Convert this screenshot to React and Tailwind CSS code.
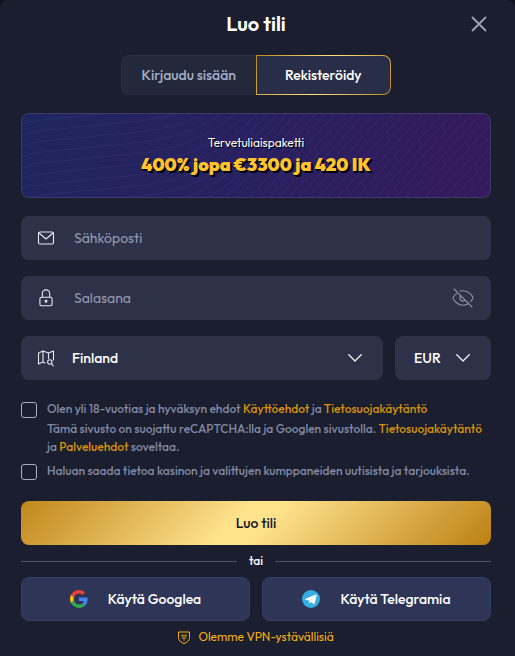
import React from "react";

const waveOffsets = Array.from({ length: 42 }, (_, i) => i * 11);

function Waves() {
  return (
    <svg
      className="pointer-events-none absolute inset-0 h-full w-full"
      viewBox="0 0 470 85"
      preserveAspectRatio="none"
      fill="none"
      stroke="#8a70b0"
      strokeOpacity="0.13"
      aria-hidden="true"
    >
      {waveOffsets.map((k) => (
        <path key={k} d={`M0 ${k}Q8 ${k - 4} 20 ${k - 5}L110 ${k - 14}C170 ${k - 20} 195 ${k - 36} 230 ${k - 70}L470 ${k - 340}`} />
      ))}
    </svg>
  );
}

function MailIcon() {
  return (
    <svg className="size-5 shrink-0" viewBox="0 0 20 20" fill="none" stroke="#e6e8ef" strokeWidth="1.1" strokeLinejoin="round" strokeLinecap="round" aria-hidden="true">
      <rect x="2.5" y="4" width="15" height="12" rx="1.5" />
      <path d="M3 5l7 6 7-6" />
    </svg>
  );
}

function LockIcon() {
  return (
    <svg className="size-5 shrink-0" viewBox="0 0 20 20" fill="none" stroke="#e6e8ef" strokeWidth="1.1" aria-hidden="true">
      <rect x="3.9" y="9.2" width="12.2" height="8.6" rx="1.6" />
      <path d="M6.3 9V5.6a3.7 3.7 0 0 1 7.4 0V9" />
      <circle cx="10" cy="13.3" r="0.9" fill="#e6e8ef" />
    </svg>
  );
}

function MapIcon() {
  return (
    <svg className="size-5 shrink-0" viewBox="0 0 20 20" fill="none" stroke="#e6e8ef" strokeWidth="1.1" strokeLinejoin="round" strokeLinecap="round" aria-hidden="true">
      <path d="M9 15l-2.200-1L2.500 16V5L7 3l5.500 2 5-2v9" />
      <path d="M7 3v11M12.500 5v5.500" />
      <circle cx="13.800" cy="14" r="2.200" />
      <path d="M15.500 15.800l2 2.200" />
    </svg>
  );
}

function EyeOffIcon() {
  return (
    <svg width="22" height="20" viewBox="0 0 22 20" fill="none" stroke="#8d92a8" strokeWidth="1.1" strokeLinecap="round" strokeLinejoin="round" aria-hidden="true">
      <path d="M2 1l18 18" />
      <path d="M4.500 5.600C2.300 7.300 1 9.200 1 10c0 1.600 4.300 7.300 10 7.300 1.900 0 3.600-.6 5.100-1.500" />
      <path d="M8.200 3.100C9.100 2.800 10 2.700 11 2.700c5.700 0 10 5.600 10 7.300 0 .7-1 2.200-2.600 3.700" />
      <path d="M8.500 8.200a3 3 0 0 0 4.200 4.200" />
    </svg>
  );
}

function Chevron() {
  return (
    <svg className="pointer-events-none h-2 w-3.5 shrink-0" viewBox="0 0 14 8" fill="none" stroke="#f3f4f8" strokeWidth="1.3" strokeLinecap="round" strokeLinejoin="round" aria-hidden="true">
      <path d="M0.800 0.800L7 7l6.200-6.200" />
    </svg>
  );
}

function GoogleIcon() {
  return (
    <svg className="size-[18px] shrink-0" viewBox="0 0 48 48" aria-hidden="true">
      <path fill="#EA4335" d="M24 9.500c3.540 0 6.710 1.220 9.210 3.600l6.850-6.850C35.900 2.380 30.470 0 24 0 14.620 0 6.510 5.380 2.560 13.220l7.980 6.190C12.430 13.720 17.740 9.500 24 9.500z" />
      <path fill="#4285F4" d="M46.980 24.550c0-1.570-.15-3.090-.38-4.550H24v9.020h12.940c-.58 2.960-2.260 5.480-4.780 7.180l7.730 6c4.510-4.180 7.090-10.360 7.090-17.650z" />
      <path fill="#FBBC05" d="M10.530 28.590A14.500 14.500 0 0 1 9.770 24c0-1.600.27-3.140.76-4.590l-7.980-6.190A23.900 23.900 0 0 0 0 24c0 3.880.92 7.540 2.560 10.780z" />
      <path fill="#34A853" d="M24 48c6.480 0 11.930-2.130 15.890-5.810l-7.730-6c-2.150 1.450-4.920 2.300-8.160 2.300-6.260 0-11.570-4.220-13.470-9.910l-7.980 6.190C6.510 42.620 14.620 48 24 48z" />
    </svg>
  );
}

function TelegramIcon() {
  return (
    <svg className="size-[18px] shrink-0" viewBox="0 0 18 18" aria-hidden="true">
      <circle cx="9" cy="9" r="9" fill="#37aee2" />
      <path d="M3 8.900l10.700-4.300c.6-.2 1 .1.900.8l-1.900 8.100c-.1.600-.5.700-1 .4l-2.700-2-1.400 1.300c-.3.300-.5.200-.5-.2V10.700L3.200 9.600c-.6-.2-.6-.5-.2-.7z" fill="#fff" />
      <path d="M7.100 10.700l5-4.200-4 4.800-.6 1.800z" fill="#c8daea" />
    </svg>
  );
}

function ShieldIcon() {
  return (
    <svg className="h-[13px] w-3 shrink-0" viewBox="0 0 12 13" fill="none" stroke="#f7b011" aria-hidden="true">
      <path d="M.5 1h11v5.500c0 3-2.200 5-5.500 6-3.300-1-5.500-3-5.500-6z" strokeLinejoin="round" />
      <path d="M3 4.200h6M3.500 6h5M4.500 7.700h3M5.400 9.200h1.200" strokeWidth="0.900" />
    </svg>
  );
}

const field = "flex h-11 items-center rounded-lg bg-[#2e3248]";
const link = "font-medium text-[#d5910b]";
const check = "mt-0.5 size-4 shrink-0 appearance-none rounded-[3px] border border-[#a9adbd] bg-transparent checked:bg-[#d5910b]";
const social = "flex h-11 flex-1 items-center justify-center rounded-lg border border-[#343f65] bg-[#2e3556] text-sm font-medium text-white";

export default function App() {
  return (
    <div className="min-h-screen bg-[#0f121c] font-[Outfit,Lato,sans-serif]">
      <main className="min-h-screen rounded-t-lg bg-[#1a1e2f] pl-[21px] pr-6">
        <header className="grid h-[55px] grid-cols-[1fr_auto_1fr] items-center pb-[7px]">
          <h1 className="col-start-2 text-xl font-semibold text-white">Luo tili</h1>
          <button type="button" aria-label="Sulje" className="mr-1 justify-self-end">
            <svg className="size-4" viewBox="0 0 16 16" stroke="#9da2b7" strokeWidth="1.8" strokeLinecap="round" aria-hidden="true">
              <path d="M1.500 1.500l13 13M14.500 1.500l-13 13" />
            </svg>
          </button>
        </header>

        <div className="mx-auto flex h-10 w-[270px] text-sm font-medium">
          <button type="button" className="flex-1 rounded-l-lg border border-r-0 border-[#292e45] bg-[#23283a] text-[#a4aec8]">
            Kirjaudu sisään
          </button>
          <div className="flex flex-1 rounded-r-lg bg-[linear-gradient(120deg,#c28a1c,#ffe28c_50%,#c08516)] p-px">
            <button type="button" className="flex-1 rounded-r-[7px] bg-[#282e47] text-white">
              Rekisteröidy
            </button>
          </div>
        </div>

        <section className="relative mt-[18px] flex h-[85px] flex-col items-center justify-center overflow-hidden rounded-lg border border-[#41376f] bg-[linear-gradient(100deg,#1e265f,#292060_50%,#341a5c)]">
          <Waves />
          <p className="relative text-xs leading-4 text-white [text-shadow:1px_1px_0_#000]">Tervetuliaispaketti</p>
          <p className="relative mt-0.5 text-lg leading-6 font-black text-[#ffc42e] [text-shadow:1px_1px_0_#000,2px_2px_0_#000]">
            400% jopa €3300 ja 420 IK
          </p>
        </section>

        <form className="mt-[18px]" onSubmit={(e) => e.preventDefault()}>
          <div className="flex flex-col gap-4">
            <label className={field + " pl-[15px]"}>
              <MailIcon />
              <input type="email" aria-label="Sähköposti" placeholder="Sähköposti" className="ml-[18px] h-full min-w-0 flex-1 bg-transparent text-sm text-white outline-none placeholder:text-[#9298ad]" />
            </label>
            <div className={field + " pl-[15px] pr-[17px]"}>
              <LockIcon />
              <input type="password" aria-label="Salasana" placeholder="Salasana" className="ml-[18px] h-full min-w-0 flex-1 bg-transparent text-sm text-white outline-none placeholder:text-[#9298ad]" />
              <button type="button" aria-label="Näytä salasana">
                <EyeOffIcon />
              </button>
            </div>
            <div className="flex gap-3">
              <div className={field + " min-w-0 flex-1 pl-[15px] pr-[21px]"}>
                <MapIcon />
                <select aria-label="Maa" className="ml-4 h-full min-w-0 flex-1 appearance-none bg-transparent text-sm font-medium text-white outline-none">
                  <option>Finland</option>
                </select>
                <Chevron />
              </div>
              <div className={field + " w-24 shrink-0 pl-[19px] pr-[21px]"}>
                <select aria-label="Valuutta" className="h-full min-w-0 flex-1 appearance-none bg-transparent text-sm font-medium text-white outline-none">
                  <option>EUR</option>
                </select>
                <Chevron />
              </div>
            </div>
          </div>

          <div className="mt-5 flex flex-col gap-1 text-xs font-medium text-[#8188a2]">
            <div className="flex gap-2.5">
              <input id="terms" type="checkbox" className={check} />
              <div>
                <label htmlFor="terms" className="block leading-[18px]">
                  Olen yli 18-vuotias ja hyväksyn ehdot <a href="#terms" className={link}>Käyttöehdot</a> ja{" "}
                  <a href="#privacy" className={link}>Tietosuojakäytäntö</a>
                </label>
                <p className="mt-0.5 leading-[18px]">
                  Tämä sivusto on suojattu reCAPTCHA:lla ja Googlen sivustolla.{" "}
                  <a href="#privacy" className={link}>Tietosuojakäytäntö</a> ja{" "}
                  <a href="#service" className={link}>Palveluehdot</a> soveltaa.
                </p>
              </div>
            </div>
            <div className="flex gap-2.5 pt-0.5">
              <input id="news" type="checkbox" className={check} />
              <label htmlFor="news" className="leading-[18px]">
                Haluan saada tietoa kasinon ja valittujen kumppaneiden uutisista ja tarjouksista.
              </label>
            </div>
          </div>

          <button type="submit" className="mt-[21px] h-11 w-full rounded-lg bg-[linear-gradient(135deg,#c0861a,#ffe28c_45%,#ffe28c_52%,#bb8013)] text-sm font-medium text-[#15182a]">
            Luo tili
          </button>
        </form>

        <div className="flex h-8 items-center gap-3 text-xs font-medium text-white before:h-px before:flex-1 before:bg-[#4c5164] after:h-px after:flex-1 after:bg-[#4c5164]">
          tai
        </div>

        <div className="flex gap-3">
          <button type="button" className={social + " gap-5"}>
            <GoogleIcon />
            Käytä Googlea
          </button>
          <button type="button" className={social + " gap-5"}>
            <TelegramIcon />
            Käytä Telegramia
          </button>
        </div>

        <p className="flex h-8 items-center justify-center gap-2 text-xs text-[#f7b011]">
          <ShieldIcon />
          Olemme VPN-ystävällisiä
        </p>
      </main>
    </div>
  );
}
